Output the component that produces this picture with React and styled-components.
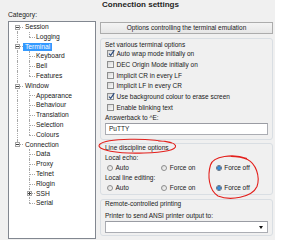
import React from "react";
import styled, { createGlobalStyle } from "styled-components";

const GlobalStyle = createGlobalStyle`
  html, body {
    margin: 0;
    padding: 0;
    background: #ffffff;
  }
  body {
    font-family: "Liberation Sans", Arial, sans-serif;
  }
`;

const Dialog = styled.div`
  position: relative;
  display: flex;
  width: 275px;
  height: 240px;
  background: #f0f0f0;
  overflow: hidden;
  color: #202020;
  font-size: 6.5px;
`;

const Sidebar = styled.div`
  display: flex;
  flex-direction: column;
  width: 88px;
  margin-left: 8px;
  padding-top: 10px;
  padding-bottom: 1px;
  box-sizing: border-box;
`;

const CategoryLabel = styled.div`
  font-size: 6.7px;
  line-height: 10px;
`;

const TreeBox = styled.div`
  flex: 1;
  margin-top: 1px;
  border: 1px solid #828790;
  background: #ffffff;
`;

const TreeRow = styled.div`
  position: relative;
  height: 9.8px;
  line-height: 9.8px;
  padding-left: ${(p) => (p.$level === 0 ? 16 : 27)}px;
  font-size: 6.7px;
  white-space: nowrap;
`;

const TreeLabel = styled.span`
  display: inline-block;
  padding: 0 2px;
  margin-left: -2px;
  line-height: 8px;
  background: ${(p) => (p.$selected ? "#3399ff" : "transparent")};
  color: ${(p) => (p.$selected ? "#ffffff" : "inherit")};
`;

const VLine = styled.span`
  position: absolute;
  left: ${(p) => p.$x}px;
  top: ${(p) => (p.$kind === "bottom" ? "50%" : "0")};
  bottom: ${(p) => (p.$kind === "top" ? "50%" : "0")};
  border-left: 1px dotted #a8a8a8;
`;

const HLine = styled.span`
  position: absolute;
  left: ${(p) => p.$x}px;
  width: 6px;
  top: 50%;
  border-top: 1px dotted #a8a8a8;
`;

const Expander = styled.span`
  position: absolute;
  left: ${(p) => p.$x - 2}px;
  top: 50%;
  width: 5px;
  height: 5px;
  margin-top: -2px;
  box-sizing: border-box;
  border: 1px solid #a5a5a5;
  background: #ffffff;
  &::before {
    content: "";
    position: absolute;
    left: 0;
    right: 0;
    top: 1px;
    height: 1px;
    background: #404040;
  }
  &::after {
    content: "";
    display: ${(p) => (p.$open ? "none" : "block")};
    position: absolute;
    top: 0;
    bottom: 0;
    left: 1px;
    width: 1px;
    background: #404040;
  }
`;

const Main = styled.div`
  display: flex;
  flex-direction: column;
  width: 173px;
  margin-left: 4px;
`;

const Title = styled.div`
  padding-left: 2px;
  font-size: 8px;
  font-weight: bold;
  line-height: 10px;
  color: #1e1e1e;
`;

const HeaderButton = styled.div`
  margin-top: 12px;
  height: 12px;
  box-sizing: border-box;
  border: 1px solid #acacac;
  background: linear-gradient(#f4f4f4, #e6e6e6);
  text-align: center;
  line-height: 10px;
`;

const Group = styled.div`
  margin-top: ${(p) => p.$gap}px;
  padding: ${(p) => p.$top}px 4px ${(p) => p.$bottom}px;
  border: 1px solid #d9dee3;
  border-radius: 3px;
`;

const GroupTitle = styled.div`
  line-height: ${(p) => p.$lh || 8}px;
`;

const Caption = styled.div`
  margin-top: ${(p) => p.$gap || 0}px;
  line-height: ${(p) => p.$lh || 9}px;
`;

const CheckRow = styled.div`
  display: flex;
  align-items: center;
  gap: 2.5px;
  height: 10.7px;
  padding-left: 2px;
`;

const CheckBox = styled.span`
  position: relative;
  width: 7px;
  height: 7px;
  box-sizing: border-box;
  border: 1px solid #8e8f8f;
  background: linear-gradient(135deg, #d8d8d8, #fafafa);
  svg {
    position: absolute;
    left: 0;
    top: -1px;
    overflow: visible;
  }
`;

const Field = styled.div`
  position: relative;
  margin-top: ${(p) => p.$gap || 0}px;
  height: 12px;
  box-sizing: border-box;
  border: 1px solid #abadb3;
  border-top-color: #9a9ca3;
  background: #ffffff;
  padding-left: 3px;
  line-height: 10px;
`;

const DropArrow = styled.span`
  position: absolute;
  right: 4px;
  top: 4px;
  border-left: 2.5px solid transparent;
  border-right: 2.5px solid transparent;
  border-top: 3px solid #111111;
`;

const RadioGrid = styled.div`
  display: grid;
  grid-template-columns: repeat(3, 1fr);
  height: 10px;
`;

const RadioItem = styled.div`
  display: flex;
  align-items: center;
  gap: 2.5px;
  padding-left: 2px;
`;

const RadioDot = styled.span`
  width: 6px;
  height: 6px;
  box-sizing: border-box;
  border-radius: 50%;
  border: 1px solid ${(p) => (p.$on ? "#5b6b7c" : "#8e8f8f")};
  background: ${(p) =>
    p.$on
      ? "radial-gradient(circle, #4fb0f0 0, #1d6fc4 1.5px, #e8e8e8 2px)"
      : "linear-gradient(135deg, #d6d6d6, #fbfbfb)"};
`;

const Annotations = styled.svg`
  position: absolute;
  left: 0;
  top: 0;
  pointer-events: none;
`;

const tree = [
  { label: "Session", level: 0, open: true, stem: "bottom" },
  { label: "Logging", level: 1, branch: "top", stem: "full" },
  { label: "Terminal", level: 0, open: true, stem: "full", selected: true },
  { label: "Keyboard", level: 1, branch: "full", stem: "full" },
  { label: "Bell", level: 1, branch: "full", stem: "full" },
  { label: "Features", level: 1, branch: "top", stem: "full" },
  { label: "Window", level: 0, open: true, stem: "full" },
  { label: "Appearance", level: 1, branch: "full", stem: "full" },
  { label: "Behaviour", level: 1, branch: "full", stem: "full" },
  { label: "Translation", level: 1, branch: "full", stem: "full" },
  { label: "Selection", level: 1, branch: "full", stem: "full" },
  { label: "Colours", level: 1, branch: "top", stem: "full" },
  { label: "Connection", level: 0, open: true, stem: "top" },
  { label: "Data", level: 1, branch: "full" },
  { label: "Proxy", level: 1, branch: "full" },
  { label: "Telnet", level: 1, branch: "full" },
  { label: "Rlogin", level: 1, branch: "full" },
  { label: "SSH", level: 1, branch: "full", closed: true },
  { label: "Serial", level: 1, branch: "top" },
];

const terminalOptions = [
  { label: "Auto wrap mode initially on", checked: true },
  { label: "DEC Origin Mode initially on" },
  { label: "Implicit CR in every LF" },
  { label: "Implicit LF in every CR" },
  { label: "Use background colour to erase screen", checked: true },
  { label: "Enable blinking text" },
];

const radioChoices = ["Auto", "Force on", "Force off"];

function Tick() {
  return (
    <svg width="7" height="7" viewBox="0 0 7 7">
      <path d="M1 3.6 L2.7 5.4 L6.3 0.2" fill="none" stroke="#2a4a7e" strokeWidth="1.2" />
    </svg>
  );
}

function TreeItem({ item }) {
  const lineX = item.level === 0 ? 8 : 20;
  return (
    <TreeRow $level={item.level}>
      {item.stem && <VLine $x={8} $kind={item.stem} />}
      {item.branch && <VLine $x={20} $kind={item.branch} />}
      <HLine $x={lineX} />
      {item.open && <Expander $x={lineX} $open />}
      {item.closed && <Expander $x={lineX} />}
      <TreeLabel $selected={item.selected}>{item.label}</TreeLabel>
    </TreeRow>
  );
}

function RadioRow({ selected }) {
  return (
    <RadioGrid>
      {radioChoices.map((choice) => (
        <RadioItem key={choice}>
          <RadioDot $on={choice === selected} />
          {choice}
        </RadioItem>
      ))}
    </RadioGrid>
  );
}

export default function App() {
  return (
    <>
      <GlobalStyle />
      <Dialog>
        <Sidebar>
          <CategoryLabel>Category:</CategoryLabel>
          <TreeBox>
            {tree.map((item) => (
              <TreeItem key={item.label} item={item} />
            ))}
          </TreeBox>
        </Sidebar>

        <Main>
          <Title>Connection settings</Title>
          <HeaderButton>Options controlling the terminal emulation</HeaderButton>

          <Group $gap={4} $top={1.5} $bottom={4}>
            <GroupTitle>Set various terminal options</GroupTitle>
            {terminalOptions.map((opt) => (
              <CheckRow key={opt.label}>
                <CheckBox>{opt.checked && <Tick />}</CheckBox>
                {opt.label}
              </CheckRow>
            ))}
            <Caption>Answerback to ^E:</Caption>
            <Field $gap={1.3}>PuTTY</Field>
          </Group>

          <Group $gap={3} $top={0} $bottom={1}>
            <GroupTitle $lh={7}>Line discipline options</GroupTitle>
            <Caption $gap={2} $lh={10}>Local echo:</Caption>
            <RadioRow selected="Force off" />
            <Caption $lh={10}>Local line editing:</Caption>
            <RadioRow selected="Force off" />
          </Group>

          <Group $gap={4} $top={0} $bottom={2}>
            <GroupTitle $lh={7}>Remote-controlled printing</GroupTitle>
            <Caption $gap={4} $lh={10}>Printer to send ANSI printer output to:</Caption>
            <Field>
              <DropArrow />
            </Field>
          </Group>
        </Main>

        <Annotations width="275" height="240" viewBox="0 0 275 240">
          <path
            d="M172 143 C150 137.5 106 138 99.5 144.5 C95.5 150 118 154 144 153 C164 152.5 177 150 175.5 145.5 C174 142.5 166 141 158 141"
            fill="none"
            stroke="#e3201c"
            strokeWidth="1.1"
          />
          <path
            d="M247 158.5 C233 153.5 213 156 210.5 165 C207.5 175 208.5 190 218 196 C230 201 252 197.5 257 186.5 C260.5 176 255.5 163.5 247.5 159.5 C243 157.5 237 156.5 231 156.5"
            fill="none"
            stroke="#e3201c"
            strokeWidth="1.1"
          />
        </Annotations>
      </Dialog>
    </>
  );
}
